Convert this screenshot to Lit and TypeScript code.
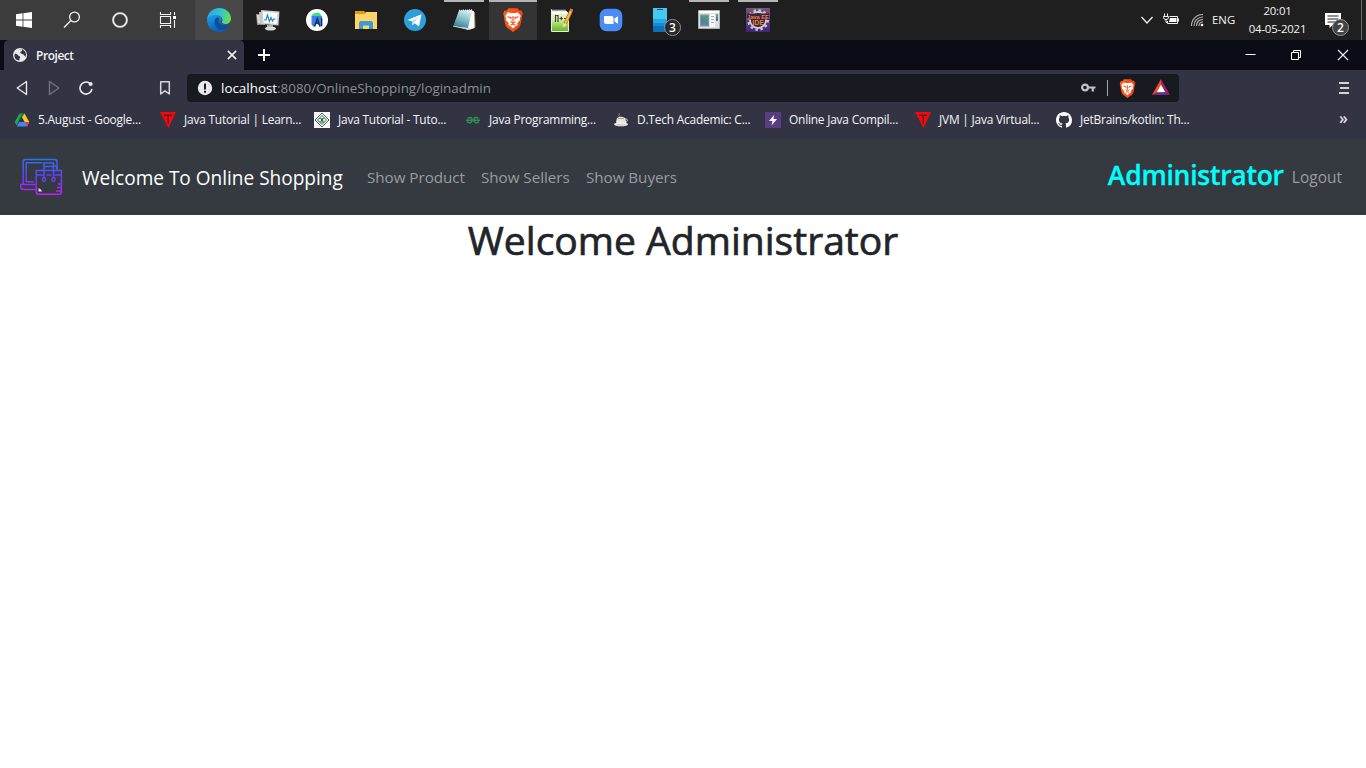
import { LitElement, html, css, svg } from "lit";
import { customElement } from "lit/decorators.js";
import { classMap } from "lit/directives/class-map.js";

const box = (size: number, body: unknown, view = size) =>
  html`<svg width=${size} height=${size} viewBox="0 0 ${view} ${view}" fill="none">${body}</svg>`;

/* ---------- start area ---------- */
const windowsLogo = box(16, svg`<path fill="#fff" d="M0 2.3 6.6 1.3V7.6H0zM7.4 1.2 16 0V7.6H7.4zM0 8.4H6.6V14.7L0 13.7zM7.4 8.4H16V16L7.4 14.8z"/>`);
const searchIcon = box(18, svg`<g stroke="#f2f2f2" stroke-width="1.3"><circle cx="11.5" cy="6" r="4.9"/><path d="M7.9 9.5 1 16.5"/></g>`);
const cortana = box(18, svg`<circle cx="9" cy="9" r="6.9" stroke="#ededed" stroke-width="1.9"/>`);
const taskView = box(18, svg`<g stroke="#f2f2f2" stroke-width="1.1"><path d="M1.500 1v2.500h10V1M1.500 17v-2.500h10V17M1.500 5.500h10v7h-10zM15.500 1v3M15.500 9v8"/></g><path fill="#fff" d="M14 5h3v3h-3z"/>`);

/* ---------- pinned apps ---------- */
const edge = box(24, svg`
  <defs>
    <linearGradient id="ea" x1="2" y1="4" x2="23" y2="12" gradientUnits="userSpaceOnUse"><stop stop-color="#26a9e0"/><stop offset=".5" stop-color="#35c4d2"/><stop offset="1" stop-color="#65e346"/></linearGradient>
    <linearGradient id="eb" x1="0" y1="8" x2="9" y2="24" gradientUnits="userSpaceOnUse"><stop stop-color="#1ba0e8"/><stop offset="1" stop-color="#0d5cb5"/></linearGradient>
  </defs>
  <path fill="url(#eb)" d="M0 11.500C1 7 6 5.500 10 6.500c4 1 5 3.500 4.500 5.500-1 1.500-.5 4 3 4.500 2.500.3 4.300-.8 5-.5C21 21 17 24 12 24 5 24 0 18.500 0 11.500z"/>
  <path fill="#124c9a" d="M9 10c-3 4-1 9.500 3.500 11.500 3.500 1.500 7.500-.5 10-5.500-3 1.800-7.500 2-10-1C11.300 13 11.500 11.500 12.500 10.500 11.500 9.500 10 9.300 9 10z"/>
  <path fill="url(#ea)" d="M0 11.500C.5 5 5.500 0 12 0c7 0 12 5 12 10.500 0 3.500-2.500 5.500-5.500 5.500-2.500 0-4-1-3.500-2.200 1.500-2.300-.5-6.800-6-6.800C4.500 7 1 9 0 11.500z"/>`);
const monitor = box(24, svg`
  <path fill="#8f8f8f" d="M0 6h9v11H1z"/><path fill="#dcdcdc" d="M1 7h4v8.500H1.800z"/><path fill="#c5c5c5" d="M3 4h6v12H4z"/>
  <path fill="#cfcfcf" d="M5 2 23.500 3.500 22.500 17.500 6 16z"/>
  <path fill="#f8fbfd" d="M6.800 3.800 21.500 5l-.8 11L7.500 14.500z"/>
  <path stroke="#2b87bd" stroke-width="1.200" d="M8 12h2l1.500-5 2 6.500 1.500-4 1.500 3.500 1-2h2"/>
  <path fill="#aaa" d="M11 17h6v3h-6z"/><ellipse cx="14.500" cy="20.500" rx="5.500" ry="2" fill="#d8d8d8"/>`);
const androidStudio = box(24, svg`
  <circle cx="12" cy="12" r="11" fill="#fff"/>
  <path fill="#3ddc84" d="M6.500 8.500C7 5.500 10 4.500 12.500 5l1.500-.8.5 1.300q2 1.200 2 3z"/>
  <path fill="#3c80ee" d="M6.500 8h10.500v10.500H15l-3-3-2 3H8L6.500 16z"/>
  <path stroke="#102d54" stroke-width="1.300" d="m9.500 18.500 2.800-8 2.700 8M10.500 15h3.500M16.700 10v8"/>`);
const folder = box(24, svg`
  <path fill="#df9e0d" d="M1 3h9l2 2v3H1z"/><path fill="#ffd465" d="M1 6h10l1-2h11v17H1z"/>
  <path fill="#3b9ad9" d="M5 14.500 6.500 13h11l1.500 1.500V21h-4v-3.500H9V21H5z"/>`);
const telegram = box(24, svg`
  <circle cx="12" cy="12" r="11" fill="#2ba0da"/>
  <path fill="#fff" d="M4.500 12 18.500 6.300 16 18.500l-4.300-3.200-2.200 2.200-.7-4.300z"/><path fill="#b5d8ed" d="m8.800 13.200 7.500-5-5.300 6-1.500 3.300z"/>`);
const notepad = box(24, svg`
  <defs><linearGradient id="np" x1="15" y1="2" x2="8" y2="20" gradientUnits="userSpaceOnUse"><stop stop-color="#e1f1f3"/><stop offset=".45" stop-color="#8bc5d0"/><stop offset="1" stop-color="#35818f"/></linearGradient></defs>
  <path fill="#a1824b" d="M21 4h2l.5 15-3 2z"/><path fill="#fafafa" d="m18 2 4 1 .5 17-6 2-6-2z"/>
  <path fill="#c8d6d9" d="M1 17.500 17.500 20 17 22 1 18.500z"/><path fill="url(#np)" d="M7 2.500 20 2l-4 18L1.500 17.500z"/>
  <path stroke="#e7eff0" stroke-dasharray="1 1" stroke-width="1.500" d="M7 2.500 20 2"/>`);
const lion = (size: number) => box(size, svg`
  <defs><linearGradient id="br" x2="24" gradientUnits="userSpaceOnUse"><stop stop-color="#ff651c"/><stop offset="1" stop-color="#f63c0b"/></linearGradient></defs>
  <path fill="url(#br)" d="M7.500 .3h9l2 2.300 1.800-.3 1.500 3-.7 2.500C20.500 14 19.500 18 18 19.500L12 24l-6-4.500C4.500 18 3.500 14 2.900 8l-.7-2.500 1.500-3 1.800.3z"/>
  <path fill="#fff" d="m7 4.300 2.500.7h5l2.500-.7 2.800 3.700-1 2 .2 2-2.800 3.300.3 1.700-1.700 1-2.800 2.500L9.200 18 7.500 17l.3-1.700L5 12l.2-2-1-2z"/>
  <path stroke="#f8521d" stroke-width="1.200" d="m6.500 8.800 3.500.7v1.800M17.500 8.800l-3.500.7v1.800M12 8v5.500M9.500 13.500l2.500 1.500 2.500-1.500M9.500 17.200 12 16l2.500 1.200"/>`, 24);
const notepadPP = box(24, svg`
  <defs><linearGradient id="pp" y2="1" x2="0"><stop stop-color="#f7f8f3"/><stop offset=".45" stop-color="#d9ebA5"/><stop offset="1" stop-color="#5cb717"/></linearGradient></defs>
  <path fill="url(#pp)" stroke="#e9e9e9" d="M1.500 1.500h13l4 4v18h-17z"/><path fill="#4b4b4b" d="M2 1h14v1.500H2z"/><path fill="#fff" d="M2 4h15v2H2z"/>
  <path stroke="#3f4539" stroke-width="1.200" d="M5.500 14V7.500h2.500V14M9.500 10.500H13M11.300 8.800v3.500M14 10.500h3"/>
  <path stroke="#b87914" stroke-width="3.600" d="M21 3 15 16"/><path stroke="#f7c24a" stroke-width="1.800" d="M21 3 15 16"/><path stroke="#ea6e65" stroke-width="3.200" d="m21.800 1.200-.8 2"/><path fill="#f6dfb2" d="m13.200 15.200 3.600 1.500-3.500 2.800z"/>`);
const zoomApp = box(24, svg`
  <rect x=".7" y=".7" width="22.600" height="22.600" rx="7" fill="#4a8cf6"/>
  <path fill="#fff" d="M5 8h7.500q2 0 2 2v6H7q-2 0-2-2zM15.500 10.500l3.500-2.200v7.500l-3.500-2.300z"/>`);
const phone = box(24, svg`
  <path fill="#46c9ef" d="M5 0h14v24H5z"/><path fill="#23a9e5" d="M5 11h14v13H5z"/><path fill="#168ad5" d="M5 15h14v9H5z"/><path fill="#0870bd" d="M5 18h14v6H5z"/>
  <path fill="#095e88" d="M9 1h6v1H9z"/>`);
const windowApp = box(24, svg`
  <path fill="#dce0e2" stroke="#aeb0b1" d="M1.500 2.500h21v18h-21z"/><path fill="#fff" d="M2 3h20v2H2z"/>
  <path fill="#729b9b" d="M3 6.500h9v12H3z"/><path fill="#4f9a7b" d="M4 8h7v9H4z"/><path fill="#5d81a5" d="m4 8 7 5v4H4z"/>
  <path fill="#fafafa" d="M13 6h5v13h-5z"/><path stroke="#a5a9aa" d="M14 8.500h3m-3 3h3m-3 3h3"/><path fill="#4a779c" d="M19 6h2v7h-2z"/><path fill="#54a679" d="M19 6h2v3h-2z"/>`);
const javaEE = box(24, svg`
  <defs><linearGradient id="je" y2="1" x2="0"><stop stop-color="#73567b"/><stop offset="1" stop-color="#41247b"/></linearGradient></defs>
  <path fill="url(#je)" d="M0 0h24v24H0z"/><circle cx="12" cy="12" r="9.700" stroke="#c8c5c9" stroke-width="2.500" stroke-dasharray="2.500 2.600"/><circle cx="12" cy="12" r="8" fill="#302342" stroke="#d1ced3" stroke-width="1.800"/>
  <path fill="#3c2440" d="M1 5.500h22v6H1z"/>
  <g fill="#f18336" font-family="Liberation Sans" font-weight="700" text-anchor="middle"><text x="12" y="10.500" font-size="5.600">Java EE</text><text x="12" y="17" font-size="6.800">IDE</text></g>`);

/* ---------- tray ---------- */
const trayUp = box(14, svg`<path stroke="#f0f0f0" stroke-width="1.300" d="m1.500 4 5.500 6 5.500-6"/>`);
const battery = box(16, svg`<g stroke="#f3f3f3"><path d="M6.500 4.500h8v7h-10V9M15.500 6.500v3M1.500 1.500V4m3-2.500V4M.5 4.500h5v1q0 2-2.500 2T.5 5.500zM3 7v3.500h1.500"/></g><path fill="#fff" d="M7 6h6.500v4H6z"/>`);
const wifi = box(14, svg`<g stroke="#b5b5b5" stroke-width="1.100"><path d="M1.500 13C1.500 6.500 6 1.500 13 1.500M4 13c0-5 3.500-9 9-9M6.500 13c0-4 2.500-6.500 6.500-6.500M9 13c0-2.500 1.500-4 4-4"/></g><circle cx="12" cy="12" r="1.300" fill="#fff"/>`);
const notice = box(18, svg`<path fill="#fff" d="M1 2h16v12H9l-3.500 3v-3H1z"/><path stroke="#222" stroke-width="1.200" d="M3.500 5h11m-11 3h11m-11 3h8"/>`);

/* ---------- browser ---------- */
const globe = box(14, svg`<circle cx="7" cy="7" r="7" fill="#e8e9ec"/><path fill="#323443" d="M2 5.500C4 6 5 6.500 5.500 8c2 0 2 1.500 1 2.500v2C3 12.500 1 9.500 1.500 7zM6.500 1.500 9 1.600v1.500l-2 1 1 1.500 2.500.8 2 2.600.5-2.500C13 3 9.500.8 6.500 1.500z"/>`);
const cross = (size: number, w: number) => box(size, svg`<path stroke="#f0f0f3" stroke-width=${w} d="m1 1 10 10M11 1 1 11"/>`, 12);
const plus = box(13, svg`<path stroke="#fff" stroke-width="2" d="M6 0v12M0 6h12"/>`);
const minimize = box(11, svg`<path stroke="#fff" d="M.5 4.500h10"/>`);
const restore = box(11, svg`<path stroke="#fff" d="M.5 2.500h7v7h-7zM2.500 2.500V.5h7v7H8"/>`);
const back = box(16, svg`<path stroke="#e4e5e9" stroke-width="1.400" stroke-linejoin="round" d="M12.500 1.500v13L3.200 8z"/>`);
const forward = box(16, svg`<path stroke="#70727e" stroke-width="1.400" stroke-linejoin="round" d="M3.500 1.500v13L12.800 8z"/>`);
const reload = box(16, svg`<path stroke="#e8e9ec" stroke-width="1.600" d="M11.500 3.200A6 6 0 1 0 13.900 9"/><circle cx="12.600" cy="4" r="2.100" fill="#e8e9ec"/>`);
const bookmark = box(16, svg`<path stroke="#d5d6dc" stroke-width="1.500" stroke-linejoin="round" d="M3.700 1.700h8.600v12.300L8 10.800 3.700 14z"/>`);
const info = box(16, svg`<circle cx="8" cy="8" r="7.200" fill="#e9e9ed"/><path fill="#171a21" d="M7 3.500h2v6H7zM7 10.700h2v2H7z"/>`);
const key = box(16, svg`<circle cx="5" cy="7.500" r="2.900" stroke="#c2c3c7" stroke-width="2.200"/><path stroke="#c2c3c7" stroke-width="2.200" d="M8 7.500h7.500M12.800 8v3.500"/>`);
const bat = box(18, svg`<path fill="#ff4724" d="M9 0v6L4.500 14 0 16z"/><path fill="#9e1f63" d="m9 0 9 16-4.500-2L9 6z"/><path fill="#662d91" d="M0 16 4.500 13.500h9L18 16z"/><path fill="#fff" d="m9 5.500 4.300 7.800H4.700z"/>`);
const menu = html`<svg width="10" height="12" viewBox="0 0 10 12"><path stroke="#d3d4d9" stroke-width="2" d="M0 1h10M1 6h9M0 11h10"/></svg>`;
const drive = box(16, svg`<path fill="#23a455" d="M5.500 1.500h2.700l-5.400 12L.7 10z"/><path fill="#198744" d="M5.500 1.500h5L8 6z"/><path fill="#ffc71b" d="M8 5.500 10.500 1.500 15.300 10h-4.600z"/><path fill="#4285f4" d="M5.200 10h10.100L13 14.500H2.800z"/><path fill="#ea4335" d="m11.500 10h3.800L13 14.500z"/>`);
const redT = box(16, svg`<path fill="#fa0606" d="M0 0h16L8.500 16z"/><path fill="#4a2030" d="M4 2.500h8V4H8.800v8H7.500V4H4z"/>`);
const tuto = box(16, svg`<path fill="#f7f7f7" d="M0 0h16v16H0z"/><path stroke="#59615d" d="m8 1 7 7-7 7-7-7zM8 3.500 12.500 8 8 12.500 3.500 8z"/><path stroke="#35a864" stroke-width="1.200" d="M5 6.500h6M5.500 9Q8 11.500 10.500 9"/><circle cx="8" cy="8" r="1.200" fill="#38533f"/>`);
const gfg = box(16, svg`<path stroke="#2f9150" stroke-width="1.500" d="M2.500 6.300Q7 4 7 8T2 10M1 8.200h14M13.500 6.300Q9 4 9 8t5 2"/>`);
const cup = box(16, svg`<path fill="#e9e6e1" d="M4 6q4-2.500 8 0l1.500 5-2 1.500h-7L3 10z"/><path stroke="#e4e1dc" d="M12 7c3.500-.5 2.500 3 .5 3"/><ellipse cx="8" cy="12.300" rx="7" ry="1.900" fill="#f2f1ec"/><path stroke="#85878d" d="M6.500 5c-2-2 1-2-.5-4"/><path fill="#aaa49b" d="M5 6h6v1H5zM3 12.500h9v.8H4z"/>`);
const bolt = box(16, svg`<path fill="#5a3c82" d="M0 0h16v16H0z"/><path fill="#fff" d="M9 3 4 9h3.500L6.500 13.500 12 7H8.500z"/>`);
const github = box(16, svg`<path fill="#fff" fill-rule="evenodd" d="M8 0C3.580 0 0 3.580 0 8c0 3.540 2.290 6.530 5.470 7.590.4.070.55-.17.55-.38 0-.19-.01-.82-.01-1.490-2.010.37-2.530-.49-2.690-.94-.09-.23-.48-.94-.82-1.130-.28-.15-.68-.52-.01-.53.63-.01 1.080.58 1.230.82.72 1.210 1.870.87 2.330.66.07-.52.28-.87.51-1.070-1.780-.2-3.640-.89-3.640-3.950 0-.87.31-1.590.82-2.150-.08-.2-.36-1.020.08-2.120 0 0 .67-.21 2.200.82a7.600 7.600 0 0 1 4 0c1.530-1.040 2.200-.82 2.200-.82.44 1.100.16 1.920.08 2.120.51.56.82 1.270.82 2.150 0 3.070-1.870 3.750-3.650 3.950.29.25.54.73.54 1.480 0 1.070-.01 1.930-.01 2.200 0 .21.15.46.55.38A8 8 0 0 0 16 8c0-4.420-3.580-8-8-8z"/>`);

const shopLogo = html`<svg width="44" height="40" viewBox="0 -1 44 40" fill="none">
  <defs><linearGradient id="shop" x1="0" y1="1" x2="0" y2="37" gradientUnits="userSpaceOnUse"><stop stop-color="#2872f2"/><stop offset=".5" stop-color="#643ff5"/><stop offset="1" stop-color="#c51cf0"/></linearGradient></defs>
  <g stroke="url(#shop)" stroke-width="1.500">
    <path d="M3.200 26V4Q3.200 1.500 5.700 1.500h28.800q2.500 0 2.500 2.500v8M6.200 24V4.700H22.500M6.200 23.800H14M15.500 26.500H.8v2.500q0 2.500 3 2.500H15.500"/>
    <path d="M16.200 12.500h25.200v21.200q0 2.500-2.500 2.500H18.700q-2.500 0-2.500-2.500zM17 17h6.500m3 0h5m3 0h6.500M24 20V5h9.500v15M24 8.500h9.500M33.500 8h3.500v4"/>
    <circle cx="24" cy="21.500" r="1.700"/><circle cx="33.500" cy="21.500" r="1.700"/><path d="M38 26h3.500m-4.500 3.500h4.500m-5.500 3.500h5"/>
  </g><path fill="#e5d6fb" d="M18.500 30v3.500h3.500q-.5-2.200-3.500-3.500z"/></svg>`;

interface Pin { icon: unknown; active?: boolean; running?: boolean; lit?: boolean; badge?: string }
const pins: Pin[] = [
  { icon: edge, lit: true }, { icon: monitor }, { icon: androidStudio }, { icon: folder }, { icon: telegram },
  { icon: notepad, running: true }, { icon: lion(24), active: true }, { icon: notepadPP }, { icon: zoomApp },
  { icon: phone, badge: "3" }, { icon: windowApp, running: true }, { icon: javaEE, running: true },
];

@customElement("task-bar")
export class TaskBar extends LitElement {
  static styles = css`
    :host { display: flex; height: 40px; background: #1f1f1f; color: #f3f3f3; font: 11.4px/18px "Open Sans", "Noto Sans", sans-serif; }
    svg { display: block; flex: none; }
    .start { display: flex; width: 195px; background: #3c3c3c; }
    .slot { width: 48px; display: grid; place-items: center; position: relative; border-top: 2px solid transparent; box-sizing: border-box; padding-bottom: 2px; }
    .pins { display: flex; gap: 1px; flex: 1; }
    .lit { background: #484848; }
    .active { background: #343434; border-top-color: #b5b5b5; }
    .running { border-image: linear-gradient(90deg, transparent 4px, #b5b5b5 4px 44px, transparent 44px) 2 0 0 0; }
    .badge { position: absolute; display: grid; place-items: center; box-sizing: border-box; width: 17px; height: 17px; border-radius: 50%; background: #292929; border: 1px solid #929292; color: #fff; font-size: 12px; font-weight: 600; line-height: 14px; }
    .pin-badge { left: 28px; top: 17px; }
    .tray { display: flex; align-items: center; width: 222px; box-sizing: border-box; border-right: 1px solid #686868; margin-right: 4px; }
    .up { width: 23px; } .bat { width: 27px; } .net { width: 22px; }
    .lang { width: 37px; }
    .clock { width: 57px; display: flex; flex-direction: column; align-items: center; letter-spacing: -.2px; white-space: nowrap; }
    .notice { position: relative; margin-left: 18px; }
    .notice .badge { left: 8px; top: 8px; background: #444; }
  `;
  render() {
    return html`
      <div class="start">${[windowsLogo, searchIcon, cortana, taskView].map((i) => html`<div class="slot">${i}</div>`)}</div>
      <div class="pins">${pins.map((p) => html`<div class=${classMap({ slot: true, lit: !!p.lit, active: !!p.active, running: !!p.running })}>
        ${p.icon}${p.badge ? html`<span class="badge pin-badge">${p.badge}</span>` : ""}</div>`)}</div>
      <div class="tray">
        <span class="up">${trayUp}</span><span class="bat">${battery}</span><span class="net">${wifi}</span>
        <span class="lang">ENG</span>
        <div class="clock"><div>20:01</div><div>04-05-2021</div></div>
        <div class="notice">${notice}<span class="badge">2</span></div>
      </div>`;
  }
}

const marks: [unknown, string][] = [
  [drive, "5.August - Google..."], [redT, "Java Tutorial | Learn..."], [tuto, "Java Tutorial - Tuto..."], [gfg, "Java Programming..."],
  [cup, "D.Tech Academic: C..."], [bolt, "Online Java Compil..."], [redT, "JVM | Java Virtual..."], [github, "JetBrains/kotlin: Th..."],
];

@customElement("browser-chrome")
export class BrowserChrome extends LitElement {
  static styles = css`
    :host { display: block; height: 99px; background: #323443; color: #f5f5f7; font: 11.9px/16px "Open Sans", "Noto Sans", sans-serif; white-space: nowrap; }
    svg { display: block; flex: none; }
    .strip { display: flex; align-items: center; height: 30px; background: #0b0b15; padding-left: 4px; box-sizing: border-box; }
    .tab { display: flex; align-items: center; box-sizing: border-box; width: 240px; height: 30px; padding: 0 7px 0 9px; gap: 9px; background: #323443; border-radius: 5px 5px 0 0; font-weight: 600; }
    .tab span { flex: 1; letter-spacing: -.4px; padding-bottom: 1px; }
    .plus { margin: 0 auto 0 14px; }
    .controls { display: flex; gap: 35px; padding-right: 17px; align-items: center; }
    .bar { display: flex; align-items: center; height: 36px; padding: 0 17px 0 14px; }
    .nav { display: flex; gap: 16px; width: 143px; }
    .mark { width: 30px; }
    .url { display: flex; align-items: center; box-sizing: border-box; width: 992px; height: 28px; border-radius: 4px; background: #171a21; padding: 0 9px 0 10px; }
    .address { flex: 1; margin-left: 8px; font-size: 13.400px; color: #8c8e94; }
    .host { color: #fff; }
    .line { width: 1px; height: 16px; background: #a2a3a8; margin: 0 10px 0 11px; }
    .brave { margin-right: 15px; }
    .menu { margin-left: auto; }
    .marks { display: grid; grid-template-columns: 146px 154px 151px 148px 152px 150px 141px 1fr auto; height: 27px; padding: 0 18px 6px 14px; align-items: center; }
    .item { display: flex; align-items: center; gap: 8px; letter-spacing: -.2px; }
    .item span { padding-bottom: 1px; }
    .more { font-size: 16px; font-weight: 600; line-height: 16px; padding-bottom: 3px; color: #dedfe4; }
  `;
  render() {
    return html`
      <div class="strip">
        <div class="tab">${globe}<span>Project</span>${cross(10, 1.9)}</div>
        <div class="plus">${plus}</div>
        <div class="controls">${minimize}${restore}${cross(12, 1.2)}</div>
      </div>
      <div class="bar">
        <div class="nav">${back}${forward}${reload}</div><div class="mark">${bookmark}</div>
        <div class="url">${info}<div class="address"><span class="host">localhost</span>:8080/OnlineShopping/loginadmin</div>
          ${key}<div class="line"></div><div class="brave">${lion(19)}</div>${bat}</div>
        <div class="menu">${menu}</div>
      </div>
      <div class="marks">${marks.map(([icon, label]) => html`<div class="item">${icon}<span>${label}</span></div>`)}<span class="more">»</span></div>`;
  }
}

@customElement("app-root")
export class AppRoot extends LitElement {
  static styles = css`
    :host { display: flex; flex-direction: column; height: 768px; overflow: hidden; background: #fff; font-family: "Open Sans", "Noto Sans", sans-serif; white-space: nowrap; }
    .navbar { display: flex; align-items: center; box-sizing: border-box; height: 76px; padding: 0 24px 0 20px; background: #343a40; color: #999c9f; font-size: 15.200px; }
    svg { display: block; flex: none; }
    .brand { width: 285px; margin-left: 18px; padding-top: 1px; color: #fff; font-size: 19.050px; }
    .links { display: flex; flex: 1; letter-spacing: -.03px; }
    .admin { color: #0ff; font-size: 26.500px; font-weight: 600; line-height: 32px; padding-bottom: 4px; margin-right: 8px; letter-spacing: -.25px; -webkit-text-stroke: .3px #0ff; }
    .logout { font-size: 15.500px; }
    h1 { margin: 4px 0 0; color: #212529; text-align: center; font-size: 39.100px; line-height: 42px; font-weight: 400; -webkit-text-stroke: .7px #212529; }
    .product { width: 114px; } .sellers { width: 105px; }
  `;
  render() {
    return html`<task-bar></task-bar><browser-chrome></browser-chrome>
      <nav class="navbar">${shopLogo}<div class="brand">Welcome To Online Shopping</div>
        <div class="links"><span class="product">Show Product</span><span class="sellers">Show Sellers</span><span>Show Buyers</span></div>
        <span class="admin">Administrator</span><span class="logout">Logout</span></nav>
      <h1>Welcome Administrator</h1>`;
  }
}
